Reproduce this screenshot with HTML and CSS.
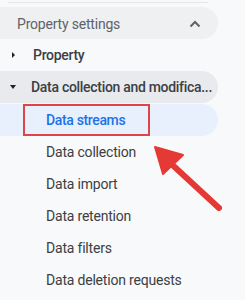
FILE: index.html
```html
<!DOCTYPE html>
<html lang="en">
<head>
  <meta charset="UTF-8">
  <title>Property settings</title>
  <link rel="stylesheet" href="styles.css">
</head>
<body>
<div class="nav">
  <div class="divider"></div>

  <div class="row section">
    <span class="label">Property settings</span>
    <svg class="chevron" width="12" height="8" viewBox="0 0 12 8">
      <path d="M1.5 6.5 L6 2 L10.5 6.5" fill="none" stroke="#5f6368" stroke-width="2"/>
    </svg>
  </div>

  <div class="row group">
    <span class="caret right"></span>
    <span class="label">Property</span>
  </div>

  <div class="row group open">
    <span class="caret down"></span>
    <span class="label">Data collection and modifica...</span>
  </div>

  <div class="row item active"><span class="label">Data streams</span></div>
  <div class="row item"><span class="label">Data collection</span></div>
  <div class="row item"><span class="label">Data import</span></div>
  <div class="row item"><span class="label">Data retention</span></div>
  <div class="row item"><span class="label">Data filters</span></div>
  <div class="row item"><span class="label">Data deletion requests</span></div>

  <!-- annotation -->
  <div class="highlight"></div>
  <svg class="arrow" width="245" height="300" viewBox="0 0 245 300">
    <line x1="219" y1="208" x2="166" y2="159" stroke="#e53935" stroke-width="6" stroke-linecap="round"/>
    <polygon points="155,147 183,155 163,174" fill="#e53935" stroke="#e53935" stroke-width="2" stroke-linejoin="round"/>
  </svg>
</div>
</body>
</html>
```

FILE: styles.css
```css
body {
  margin: 0;
  background-color: #f8f9fa;
  font-family: Roboto, "Liberation Sans", sans-serif;
  font-size: 14px;
  letter-spacing: -0.2px;
  color: #3c4043;
}
.nav {
  position: relative;
  width: 245px;
  height: 300px;
  overflow: hidden;
}
.divider {
  margin: 2px 37px 0 8px;
  height: 1px;
  background-color: #e3e5e8;
}
.row {
  display: flex;
  align-items: center;
  width: 218px;
  height: 32px;
  box-sizing: border-box;
  border-radius: 0 16px 16px 0;
  white-space: nowrap;
}
.section {
  margin-top: 4px;
  padding: 1px 17px 0 17px;
  justify-content: space-between;
  background-color: #eef0f2;
  color: #5f6368;
}
.group {
  padding: 0 4px 0 10px;
  font-weight: 500;
  letter-spacing: -0.3px;
  color: #3c4043;
}
.group.open {
  background-color: #e8eaed;
  margin-bottom: 1px;
}
.caret {
  width: 0;
  height: 0;
  flex-shrink: 0;
}
.caret.right {
  margin: 0 18px 0 2px;
  border-top: 3px solid transparent;
  border-bottom: 3px solid transparent;
  border-left: 3px solid #202124;
}
.caret.down {
  margin-right: 15px;
  border-left: 3.5px solid transparent;
  border-right: 3.5px solid transparent;
  border-top: 4px solid #202124;
}
.item {
  padding-left: 46px;
  color: #3c4043;
}
.item.active {
  background-color: #e8f0fe;
  color: #1a73e8;
  font-weight: 500;
  letter-spacing: -0.35px;
}
.highlight {
  position: absolute;
  left: 23px;
  top: 104px;
  width: 127px;
  height: 32px;
  box-sizing: border-box;
  border: 2px solid #e04444;
}
.arrow {
  position: absolute;
  left: 0;
  top: 0;
}
```
